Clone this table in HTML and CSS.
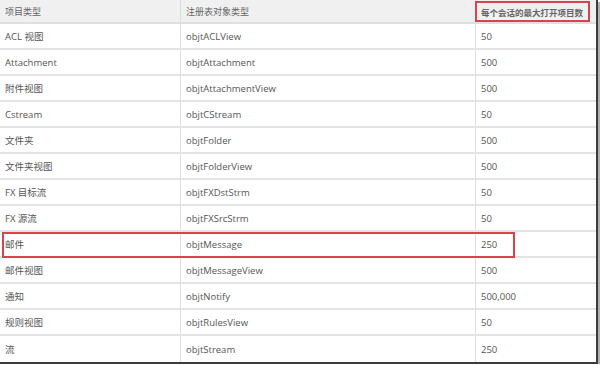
FILE: index.html
```html
<!DOCTYPE html>
<html>
<head>
<meta charset="utf-8">
<link rel="stylesheet" href="styles.css">
</head>
<body>
<div class="frame">
  <div class="table">
    <div class="row head">
      <div class="cell">项目类型</div>
      <div class="cell">注册表对象类型</div>
      <div class="cell mark">每个会话的最大打开项目数</div>
    </div>
    <div class="row"><div class="cell">ACL 视图</div><div class="cell">objtACLView</div><div class="cell">50</div></div>
    <div class="row"><div class="cell">Attachment</div><div class="cell">objtAttachment</div><div class="cell">500</div></div>
    <div class="row"><div class="cell">附件视图</div><div class="cell">objtAttachmentView</div><div class="cell">500</div></div>
    <div class="row"><div class="cell">Cstream</div><div class="cell">objtCStream</div><div class="cell">50</div></div>
    <div class="row"><div class="cell">文件夹</div><div class="cell">objtFolder</div><div class="cell">500</div></div>
    <div class="row"><div class="cell">文件夹视图</div><div class="cell">objtFolderView</div><div class="cell">500</div></div>
    <div class="row"><div class="cell">FX 目标流</div><div class="cell">objtFXDstStrm</div><div class="cell">50</div></div>
    <div class="row"><div class="cell">FX 源流</div><div class="cell">objtFXSrcStrm</div><div class="cell">50</div></div>
    <div class="row"><div class="cell">邮件</div><div class="cell">objtMessage</div><div class="cell">250</div></div>
    <div class="row"><div class="cell">邮件视图</div><div class="cell">objtMessageView</div><div class="cell">500</div></div>
    <div class="row"><div class="cell">通知</div><div class="cell">objtNotify</div><div class="cell">500,000</div></div>
    <div class="row"><div class="cell">规则视图</div><div class="cell">objtRulesView</div><div class="cell">50</div></div>
    <div class="row last"><div class="cell">流</div><div class="cell">objtStream</div><div class="cell">250</div></div>
  </div>
  <div class="highlight"></div>
</div>
</body>
</html>
```
FILE: styles.css
```css
html, body {
  margin: 0;
  padding: 0;
  background: #ffffff;
}
body {
  font-family: "Open Sans", "Noto Sans CJK SC", sans-serif;
  color: #555555;
}
.frame {
  position: relative;
  width: 596px;
  height: 362px;
  border-right: 2px solid #3c3c3c;
  border-bottom: 2px solid #3c3c3c;
  box-shadow: 2px 2px 0 #b0b0b0;
  background: #ffffff;
  overflow: hidden;
}
.table {
  display: flex;
  flex-direction: column;
}
.row {
  display: grid;
  grid-template-columns: 181px 295px 1fr;
  height: 26px;
  box-sizing: border-box;
  border-bottom: 2px solid #e4e4e4;
}
.row.head {
  height: 24px;
  background: #f0f0f0;
  border-bottom: 2px solid #e0e0e0;
}
.row.last {
  border-bottom: none;
}
.cell {
  display: flex;
  align-items: center;
  padding-left: 5px;
  font-size: 9.5px;
  border-right: 1px solid #dedede;
  white-space: nowrap;
}
.cell:last-child {
  border-right: none;
}
.head .cell {
  font-size: 9px;
  color: #666666;
}
.head .cell.mark {
  margin: 1px 6px 0 -1px;
  border: 2px solid #d9434f;
  padding-left: 4px;
  font-size: 8.5px;
  font-weight: bold;
  color: #666666;
}
.highlight {
  position: absolute;
  left: 2px;
  top: 232px;
  width: 509px;
  height: 22px;
  border: 2px solid #d9434f;
}
```
